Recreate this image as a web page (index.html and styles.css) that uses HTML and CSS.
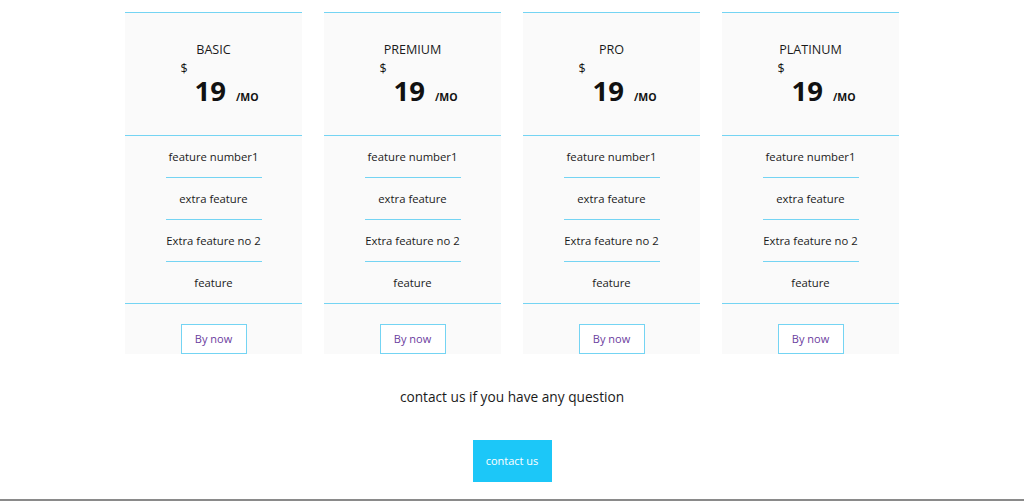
FILE: index.html
```html
<!DOCTYPE html>
<html>

<head>
    <title>Pricing</title>
    <link rel="stylesheet" href="styles.css">
</head>

<body>
    <div class="pricing">
        <div class="plan">
            <div class="plan-head">
                <h3>Basic</h3>
                <div class="price"><span class="currency">$</span><span class="amount">19</span><span class="period">/mo</span></div>
            </div>
            <ul class="features">
                <li>feature number1</li>
                <li>extra feature</li>
                <li>Extra feature no 2</li>
                <li>feature</li>
            </ul>
            <div class="plan-foot"><a href="#" class="buy">By now</a></div>
        </div>

        <div class="plan">
            <div class="plan-head">
                <h3>Premium</h3>
                <div class="price"><span class="currency">$</span><span class="amount">19</span><span class="period">/mo</span></div>
            </div>
            <ul class="features">
                <li>feature number1</li>
                <li>extra feature</li>
                <li>Extra feature no 2</li>
                <li>feature</li>
            </ul>
            <div class="plan-foot"><a href="#" class="buy">By now</a></div>
        </div>

        <div class="plan">
            <div class="plan-head">
                <h3>Pro</h3>
                <div class="price"><span class="currency">$</span><span class="amount">19</span><span class="period">/mo</span></div>
            </div>
            <ul class="features">
                <li>feature number1</li>
                <li>extra feature</li>
                <li>Extra feature no 2</li>
                <li>feature</li>
            </ul>
            <div class="plan-foot"><a href="#" class="buy">By now</a></div>
        </div>

        <div class="plan">
            <div class="plan-head">
                <h3>Platinum</h3>
                <div class="price"><span class="currency">$</span><span class="amount">19</span><span class="period">/mo</span></div>
            </div>
            <ul class="features">
                <li>feature number1</li>
                <li>extra feature</li>
                <li>Extra feature no 2</li>
                <li>feature</li>
            </ul>
            <div class="plan-foot"><a href="#" class="buy">By now</a></div>
        </div>
    </div>

    <!-- contact block -->
    <div class="contact">
        <p>contact us if you have any question</p>
        <a href="#" class="contact-btn">contact us</a>
    </div>

    <div class="footer-strip"></div>
</body>

</html>
```

FILE: styles.css
```css
body {
    font-family: "Open Sans", "Liberation Sans", sans-serif;
    margin: 0;
    padding: 0;
    background-color: #ffffff;
    color: #1a1a1a;
}

/* Pricing cards */
.pricing {
    display: flex;
    justify-content: center;
    gap: 22px;
    padding-top: 12px;
}

.plan {
    width: 177px;
    background-color: #fafafa;
    border-top: 1px solid #74d4f3;
    text-align: center;
}

.plan-head {
    padding: 27px 0 28px;
    border-bottom: 1px solid #74d4f3;
}

.plan-head h3 {
    margin: 0;
    font-size: 12.6px;
    font-weight: 400;
    line-height: 20px;
    text-transform: uppercase;
    color: #1a1a1a;
}

.price {
    display: flex;
    justify-content: center;
    align-items: baseline;
    padding-left: 12px;
    height: 47px;
}

.currency {
    align-self: flex-start;
    font-size: 12.5px;
    line-height: 18px;
    margin-right: 7px;
    color: #111;
}

.amount {
    font-size: 27.5px;
    font-weight: 700;
    line-height: 32px;
    margin-top: 15px;
    color: #111;
}

.period {
    font-size: 10.5px;
    font-weight: 700;
    text-transform: uppercase;
    margin-left: 10px;
    color: #111;
}

.features {
    list-style: none;
    margin: 0;
    padding: 0;
    border-bottom: 1px solid #74d4f3;
}

.features li {
    width: 96px;
    margin: 0 auto;
    height: 41px;
    line-height: 41px;
    font-size: 11.3px;
    white-space: nowrap;
    color: #1a1a1a;
    display: flex;
    justify-content: center;
    border-bottom: 1px solid #74d4f3;
}

.features li:last-child {
    border-bottom: none;
}

.plan-foot {
    padding-top: 20px;
}

.buy {
    display: inline-block;
    width: 64px;
    height: 28px;
    line-height: 28px;
    border: 1px solid #74d4f3;
    font-size: 11px;
    color: #6b3d9e;
    text-decoration: none;
    background-color: #ffffff;
}

/* Contact */
.contact {
    text-align: center;
}

.contact p {
    margin: 33px 0 33px;
    font-size: 13.7px;
    line-height: 20px;
    color: #1a1a1a;
}

.contact-btn {
    display: inline-block;
    width: 79px;
    height: 42px;
    line-height: 42px;
    background-color: #1cc7f8;
    color: #ffffff;
    font-size: 11px;
    text-decoration: none;
}

.footer-strip {
    margin-top: 17px;
    height: 3px;
    background-color: #8a8a8a;
}
```
